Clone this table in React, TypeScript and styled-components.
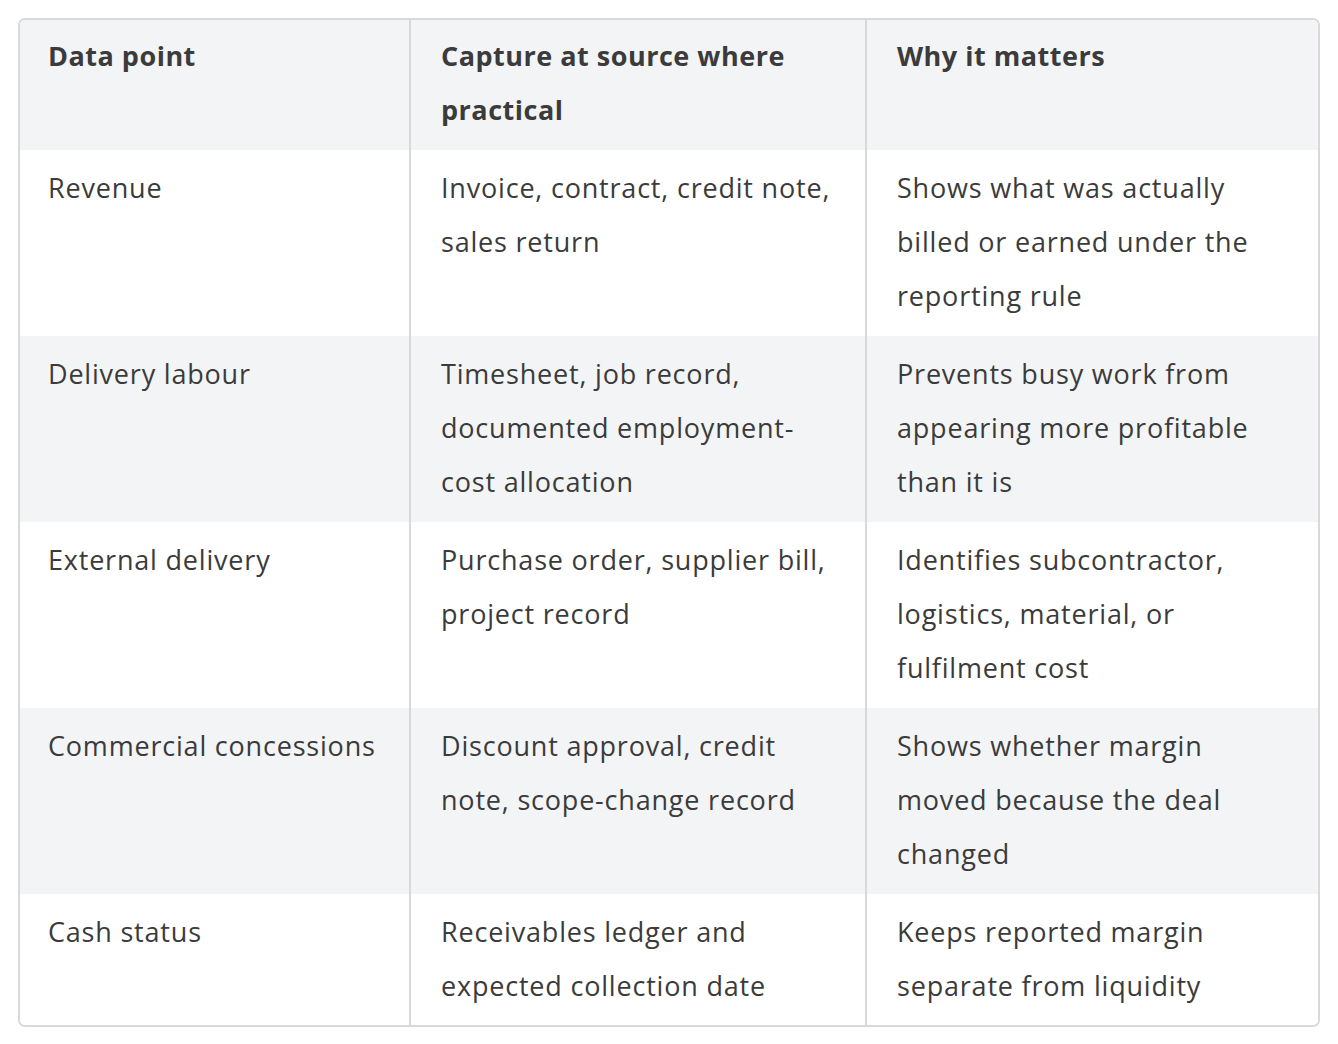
import React from 'react'
import styled, { createGlobalStyle } from 'styled-components'

const GlobalStyle = createGlobalStyle`
  html, body {
    margin: 0;
    padding: 0;
    background: #ffffff;
  }
  body {
    font-family: "Open Sans", "Noto Sans", sans-serif;
    color: #3b3b3b;
  }
`

const Page = styled.div`
  padding: 18px;
`

const Frame = styled.div`
  width: 1302px;
  border: 2px solid #d9d9db;
  border-radius: 7px;
  overflow: hidden;
  box-sizing: border-box;
`

const Table = styled.table`
  width: 100%;
  border-collapse: collapse;
  table-layout: fixed;
  font-size: 27px;
  line-height: 54px;
  letter-spacing: 0.8px;
`

const HeadRow = styled.tr`
  background: #f3f4f6;
`

const Row = styled.tr<{ $striped: boolean }>`
  background: ${(p) => (p.$striped ? '#f3f4f6' : '#ffffff')};

  &:last-child td {
    padding-bottom: 12px;
  }
`

const HeadCell = styled.th`
  text-align: left;
  vertical-align: top;
  font-weight: 700;
  letter-spacing: 0.5px;
  padding: 9px 28px 13px 30px;
  border-left: 2px solid #d9d9db;
  &:first-child {
    border-left: none;
    padding-left: 28px;
  }
`

const Cell = styled.td`
  vertical-align: top;
  padding: 11px 28px 13px 30px;
  border-left: 2px solid #d9d9db;
  &:first-child {
    border-left: none;
    padding-left: 28px;
  }
`

const rows = [
  ['Revenue', 'Invoice, contract, credit note, sales return', 'Shows what was actually billed or earned under the reporting rule'],
  ['Delivery labour', 'Timesheet, job record, documented employment-cost allocation', 'Prevents busy work from appearing more profitable than it is'],
  ['External delivery', 'Purchase order, supplier bill, project record', 'Identifies subcontractor, logistics, material, or fulfilment cost'],
  ['Commercial concessions', 'Discount approval, credit note, scope-change record', 'Shows whether margin moved because the deal changed'],
  ['Cash status', 'Receivables ledger and expected collection date', 'Keeps reported margin separate from liquidity'],
]

export default function App() {
  return (
    <Page>
      <GlobalStyle />
      <Frame>
        <Table>
          <colgroup>
            <col style={{ width: 390 }} />
            <col style={{ width: 456 }} />
            <col />
          </colgroup>
          <thead>
            <HeadRow>
              <HeadCell>Data point</HeadCell>
              <HeadCell>Capture at source where practical</HeadCell>
              <HeadCell>Why it matters</HeadCell>
            </HeadRow>
          </thead>
          <tbody>
            {rows.map((r, i) => (
              <Row key={r[0]} $striped={i % 2 === 1}>
                <Cell>{r[0]}</Cell>
                <Cell>{r[1]}</Cell>
                <Cell>{r[2]}</Cell>
              </Row>
            ))}
          </tbody>
        </Table>
      </Frame>
    </Page>
  )
}
